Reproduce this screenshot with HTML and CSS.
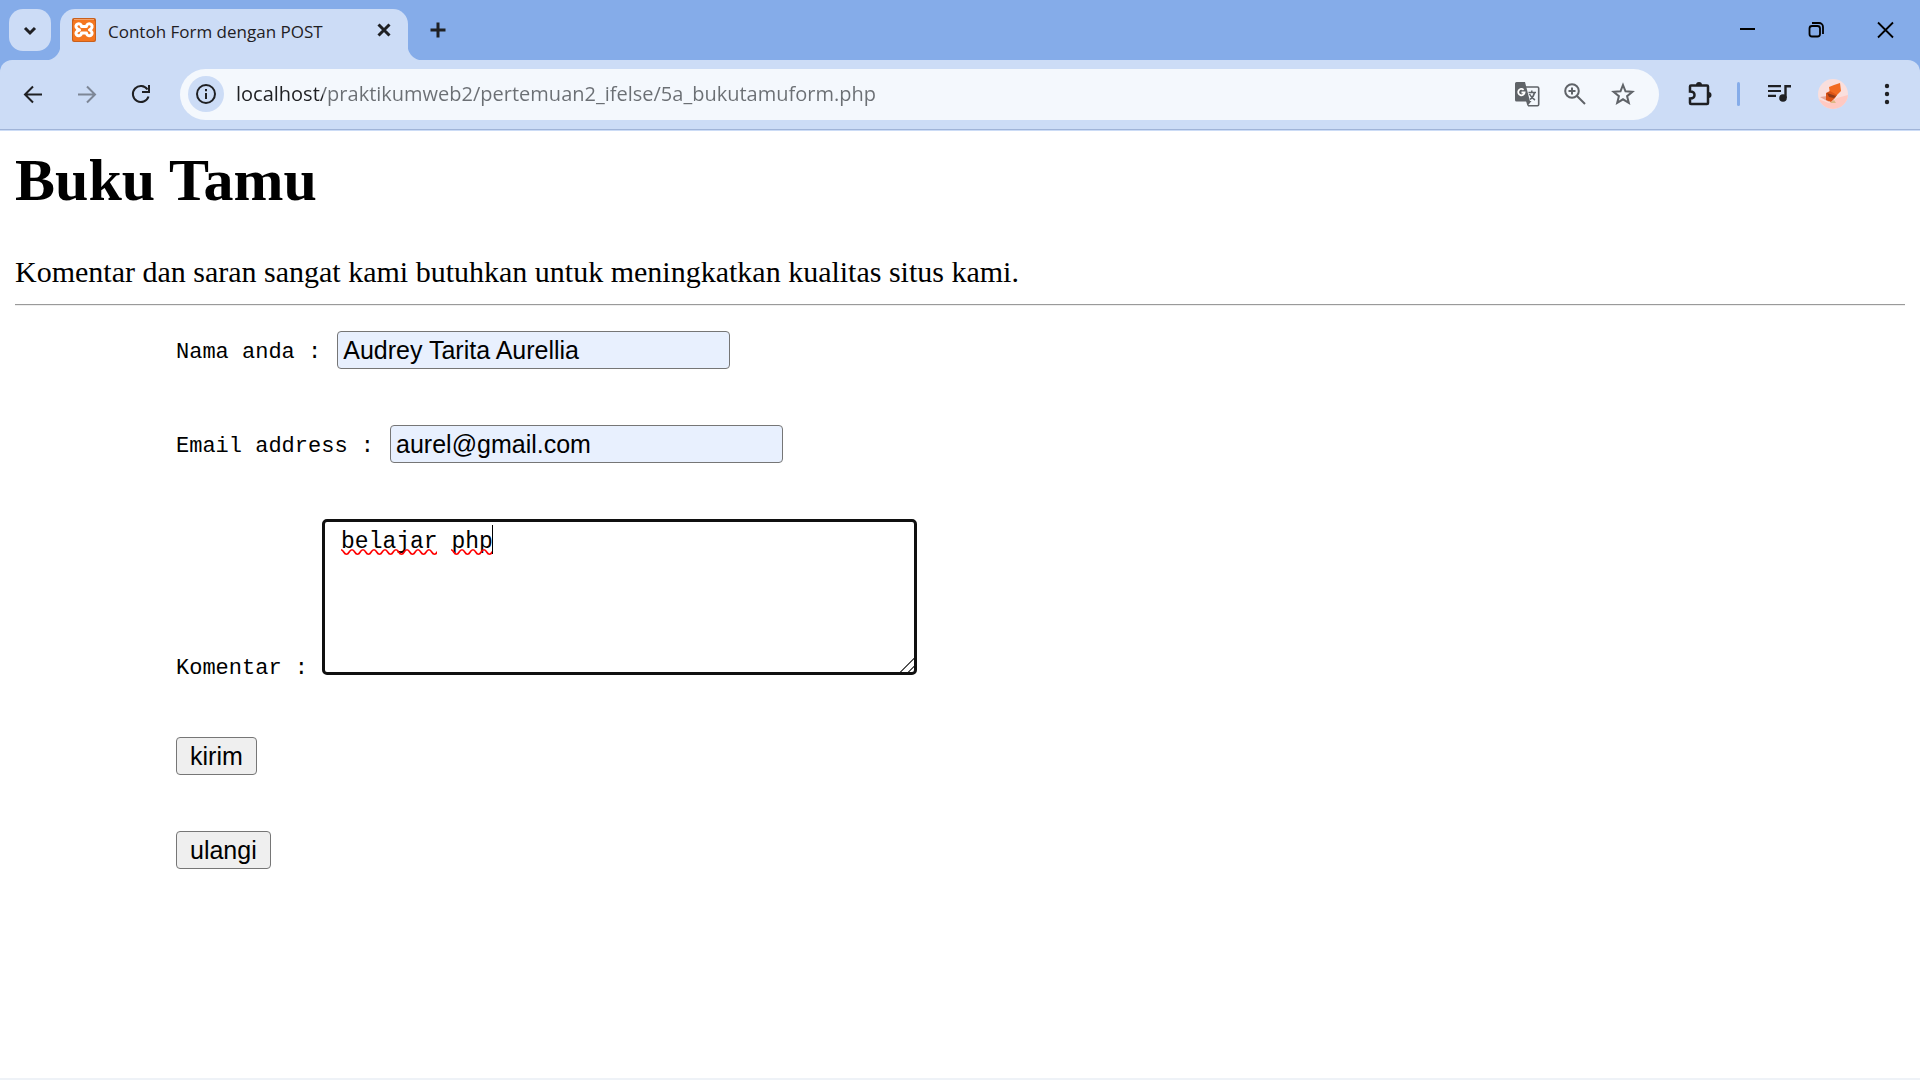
FILE: index.html
```html
<!DOCTYPE html>
<html lang="id">
<head>
<meta charset="utf-8">
<title>Contoh Form dengan POST</title>
<link rel="stylesheet" href="styles.css">
</head>
<body>
<div class="browser">
  <header class="tabstrip">
    <button class="tab-search" type="button" aria-label="Cari tab"><svg width="24" height="24" viewBox="0 0 24 24"><path class="line heavy" d="M7 10l5 5 5-5"/></svg></button>
    <div class="tab">
      <svg class="favicon" width="24" height="24" viewBox="0 0 24 24"><rect width="24" height="24" rx="2" fill="#c9601c"/><rect x="1" y="2" width="22" height="21" rx="2" fill="#f5761f"/><path d="M2 1.500h20" stroke="#f4a26b"/><path d="M7.500 12C3.500 10.500 3.500 8 4.500 6.800C6 5 9.300 5.500 9.500 8.500H14.500C14.700 5.500 18 5 19.500 6.800C20.500 8 20.500 10.500 17.500 11.800C20.500 13.500 20.500 15.500 19.500 16.800C18 18.500 14.700 18 14.500 15H9.500C9.300 18 6 18.500 4.500 16.800C3.500 15.500 3.500 13.500 7.500 12z" fill="none" stroke="#fff" stroke-width="3" stroke-linejoin="round"/></svg>
      <span class="tab-title">Contoh Form dengan POST</span>
      <button class="tab-close" type="button" aria-label="Tutup tab"><svg width="24" height="24" viewBox="0 0 24 24"><path class="line heavy" d="M6.500 6.500l11 11M17.500 6.500l-11 11"/></svg></button>
    </div>
    <button class="new-tab" type="button" aria-label="Tab baru"><svg width="24" height="24" viewBox="0 0 24 24"><path class="line heavy" d="M12 4.500v15M4.500 12h15"/></svg></button>
    <div class="window-buttons">
      <button type="button" aria-label="Perkecil"><svg width="24" height="24" viewBox="0 0 24 24"><path d="M4 11h15" fill="none" stroke="#000" stroke-width="2"/></svg></button>
      <button type="button" aria-label="Pulihkan"><svg width="24" height="24" viewBox="0 0 24 24"><g fill="none" stroke="#000" stroke-width="1.800"><rect x="4.500" y="8" width="10.500" height="10.500" rx="2.500"/><path d="M7 5h7a4 4 0 0 1 4 4v7"/></g></svg></button>
      <button type="button" aria-label="Tutup"><svg width="24" height="24" viewBox="0 0 24 24"><path d="M4 4.500l15 15M19 4.500l-15 15" fill="none" stroke="#000" stroke-width="1.800"/></svg></button>
    </div>
  </header>

  <nav class="toolbar">
    <button class="tool" type="button" aria-label="Kembali"><svg width="24" height="24" viewBox="0 0 24 24"><path class="line" d="M21 12.500H4.500M12 4.500l-8 8 8 8"/></svg></button>
    <button class="tool dim" type="button" aria-label="Maju"><svg width="24" height="24" viewBox="0 0 24 24"><path class="line" d="M3 12.500h16.500M12 4.500l8 8-8 8"/></svg></button>
    <button class="tool" type="button" aria-label="Muat ulang"><svg width="24" height="24" viewBox="0 0 24 24"><path class="line" d="M19.500 14.500A8 8 0 1 1 18.500 7.500"/><path d="M21 3v8h-8V9h6V3z" fill="#1f2023"/></svg></button>
    <div class="omnibox">
      <button class="site-info" type="button" aria-label="Info situs"><svg width="24" height="24" viewBox="0 0 24 24"><circle class="line" cx="12" cy="12" r="9"/><path d="M11 11h2v6h-2zM11 7h2v2.300h-2z" fill="#1f2023"/></svg></button>
      <input class="url" type="text" aria-label="Alamat" spellcheck="false" value="localhost/praktikumweb2/pertemuan2_ifelse/5a_bukutamuform.php">
      <button class="page-action" type="button" aria-label="Terjemahkan"><svg width="26" height="26" viewBox="0 0 26 26"><path d="M11 6h12.500a1.200 1.200 0 0 1 1.200 1.200v16.300a1.200 1.200 0 0 1-1.200 1.200h-9.500" fill="#f4f8fd" stroke="#5f6368" stroke-width="1.600"/><path d="M2.500 1h8.500l5 19.500H2.500A1.500 1.500 0 0 1 1 19v-16.500A1.500 1.500 0 0 1 2.500 1z" fill="#5f6368"/><path d="M12 20l1.500 5 4-5z" fill="#5f6368"/><path d="M9.600 8.800a3.200 3.200 0 1 0 1 2.700H7.500" fill="none" stroke="#fff" stroke-width="1.800"/><path d="M14.500 11.500H22M17.800 9.500v2M20.500 11.500c-.6 3-2.500 5.500-4.500 7M15.500 13c1.200 2.500 3 4.500 5.500 6" fill="none" stroke="#5f6368" stroke-width="1.500"/></svg></button>
      <button class="page-action" type="button" aria-label="Zoom"><svg width="24" height="24" viewBox="0 0 24 24"><g fill="none" stroke="#5f6368" stroke-width="2"><circle cx="9" cy="9" r="6.800"/><path d="M14 14l8 8M9 5.500v7M5.500 9h7"/></g></svg></button>
      <button class="page-action" type="button" aria-label="Bookmark"><svg width="24" height="24" viewBox="0 0 24 24"><path d="M12 3l2.500 6.300 6.900.5-5.300 4.400 1.700 6.700L12 17.300l-5.800 3.600 1.700-6.700L2.600 9.800l6.900-.5z" fill="none" stroke="#5f6368" stroke-width="2"/></svg></button>
    </div>
    <button class="tool extensions" type="button" aria-label="Ekstensi"><svg width="26" height="26" viewBox="0 0 26 26"><path class="line bold" d="M5 4.500h16a1 1 0 0 1 1 1V22a1 1 0 0 1-1 1H5a1 1 0 0 1-1-1v-4.500c4 0 4.500-2 4.500-3.500S8 10.500 4 10.500V5.500a1 1 0 0 1 1-1z"/><path d="M10 4a3 3 0 0 1 6 0zM22.500 11a3 3 0 0 1 0 6z" fill="#1f2023"/></svg></button>
    <span class="divider"></span>
    <button class="tool" type="button" aria-label="Kontrol media"><svg width="24" height="24" viewBox="0 0 24 24"><path d="M1 4.200h13M1 9h13M1 13.800h8" fill="none" stroke="#1f2023" stroke-width="2.200"/><circle cx="16" cy="16" r="3.800" fill="#1f2023"/><path d="M18.500 16V4.200H24" fill="none" stroke="#1f2023" stroke-width="2.400"/></svg></button>
    <button class="tool" type="button" aria-label="Profil"><svg width="30" height="30" viewBox="0 0 30 30"><defs><clipPath id="avatar"><circle cx="15" cy="15" r="15"/></clipPath></defs><g clip-path="url(#avatar)"><path fill="#fadfdd" d="M0 0h30v30H0z"/><path fill="#ffc9c2" d="M0 20l11 4 8-5 11-3v14H0z"/><path fill="#e3a69a" d="M2 18l7-1 2 6z"/><path fill="#f26a21" d="M11 8l5-2 6-2 1 8-5 5-6-2z"/><path fill="#dc5417" d="M8 14l4-2 7 4-2 3-4 4-5-2z"/><path fill="#8f3a19" d="M9 14l9 3-2 2-5-1z"/><path fill="#dbb884" d="M12 24l4-3 2 3z"/></g></svg></button>
    <button class="tool" type="button" aria-label="Menu"><svg width="24" height="24" viewBox="0 0 24 24"><g fill="#1f2023"><circle cx="12" cy="4" r="2.200"/><circle cx="12" cy="12" r="2.200"/><circle cx="12" cy="20" r="2.200"/></g></svg></button>
  </nav>

  <main class="page">
    <h1>Buku Tamu</h1>
    <p class="intro">Komentar dan saran sangat kami butuhkan untuk meningkatkan kualitas situs kami.</p>
    <hr>
    <form class="guestbook">
      <div class="row">
        <label for="nama">Nama anda :</label>
        <input class="field" id="nama" type="text" value="Audrey Tarita Aurellia">
      </div>
      <div class="row">
        <label for="email">Email address :</label>
        <input class="field" id="email" type="text" value="aurel@gmail.com">
      </div>
      <div class="row row-comment">
        <label for="komentar">Komentar :</label>
        <div class="comment">
          <textarea id="komentar" spellcheck="false">belajar php</textarea>
          <svg class="marks" width="160" height="32" viewBox="0 0 160 32">
            <defs><pattern id="wave" width="11" height="6" patternUnits="userSpaceOnUse" y="24"><path d="M-1 1L0 .8Q1.500 .8 2.700 3T5.500 5.200Q7 5.200 8.200 3T11 .8L12 1" fill="none" stroke="#f00" stroke-width="1.600"/></pattern></defs>
            <path d="M0 24h96v6H0zM110 24h41v6h-41z" fill="url(#wave)"/>
            <path d="M151 0h1v29h-1z"/>
          </svg>
        </div>
      </div>
      <button class="action" type="button">kirim</button>
      <button class="action" type="button">ulangi</button>
    </form>
  </main>
</div>
</body>
</html>
```
FILE: styles.css
```css
* { box-sizing: border-box; }

body { margin: 0; background: #fff; color: #000; }

button { margin: 0; cursor: default; }

.browser {
  display: flex;
  flex-direction: column;
  min-height: 100vh;
  background: linear-gradient(#85ace9 80px, #fff 80px);
}

.line { fill: none; stroke: #1f2023; stroke-width: 2; }
.bold { stroke-width: 2.5; }
.heavy { stroke-width: 3; }

.tabstrip button,
.toolbar button {
  display: flex;
  align-items: center;
  justify-content: center;
  padding: 0;
  border: 0;
  background: none;
}

/* Tab strip */
.tabstrip {
  display: flex;
  align-items: flex-start;
  height: 60px;
  padding: 9px 0 0 9px;
  background: #85ace9;
}

.tabstrip .tab-search {
  width: 42px;
  height: 42px;
  border-radius: 14px;
  background: #ccdcf6;
}

.tab {
  position: relative;
  display: flex;
  align-items: center;
  width: 348px;
  height: 51px;
  margin-left: 9px;
  padding: 0 12px 9px;
  border-radius: 15px 15px 0 0;
  background: #ccdcf6;
}

/* Curved feet that join the active tab to the toolbar */
.tab::before,
.tab::after {
  content: "";
  position: absolute;
  bottom: 0;
  width: 15px;
  height: 15px;
}
.tab::before { right: 100%; background: radial-gradient(circle at 0 0, transparent 15px, #ccdcf6 16px); }
.tab::after { left: 100%; background: radial-gradient(circle at 100% 0, transparent 15px, #ccdcf6 16px); }

.tab-title {
  flex: 1;
  margin: 3px 0 0 12px;
  font: 17px/24px "Open Sans", "Noto Sans", sans-serif;
  color: #1f2023;
  white-space: nowrap;
}

.tabstrip .new-tab { width: 42px; height: 42px; margin-left: 9px; }

.window-buttons { display: flex; margin-left: auto; }
.window-buttons button { width: 69px; height: 42px; }

/* Toolbar */
.toolbar {
  display: flex;
  align-items: center;
  height: 71px;
  padding: 0 6px 2px;
  border-radius: 12px 12px 0 0;
  border-bottom: 1px solid #ccdcf6;
  background: #ccdcf6;
  box-shadow: inset 0 -1px #a0b4d8;
}

.toolbar .tool { width: 54px; height: 51px; }
.tool.dim { opacity: .45; }
.toolbar .extensions { margin: 0 11px 0 13px; }

.divider { width: 3px; height: 24px; margin-right: 12px; border-radius: 2px; background: #85ace9; }

.omnibox {
  display: flex;
  flex: 1;
  align-items: center;
  height: 51px;
  margin-left: 12px;
  padding: 0 12px 0 8px;
  border-radius: 26px;
  background: #f4f8fd;
}
.omnibox .site-info { width: 36px; height: 36px; border-radius: 50%; background: #ccdcf6; }

/* The host is darker than the path behind it */
.url {
  flex: 1;
  min-width: 0;
  height: 36px;
  margin-left: 12px;
  padding: 0;
  border: 0;
  outline: 0;
  font: 20px/36px "Open Sans", "Noto Sans", sans-serif;
  color: transparent;
  background: linear-gradient(90deg, #1f2023 87px, #6b6f74 87px);
  background-clip: text;
  -webkit-background-clip: text;
}
.omnibox .page-action { width: 48px; height: 36px; }

/* Page */
.page {
  flex: 1;
  padding: 15px;
  border-bottom: 2px solid #eef2f7;
  background: #fff;
  font-family: "Liberation Serif", "Times New Roman", serif;
}

h1 { margin: 0 0 40px; font-size: 60px; line-height: 69px; }

.intro { margin: 0; font-size: 30px; line-height: 34px; }

hr {
  height: 2px;
  margin: 15px 0 25px;
  border: 0;
  border-top: 1px solid #9a9a9a;
  border-bottom: 1px solid #eee;
}

.guestbook {
  display: flex;
  flex-direction: column;
  align-items: flex-start;
  gap: 56px;
  margin-left: 161px;
}

.row { display: flex; align-items: center; gap: 16px; }
.row label { padding-top: 6px; font: 22px/26px "Liberation Mono", monospace; }

.field {
  width: 393px;
  height: 38px;
  padding: 2px 5px;
  border: 1px solid #767676;
  border-radius: 4px;
  background: #e8f0fe;
  font: 25px/30px "Liberation Sans", Arial, sans-serif;
  color: #000;
}

.row-comment { align-items: flex-end; gap: 14px; padding-bottom: 6px; }
.row-comment label { margin-bottom: -7px; }

.comment { position: relative; }

textarea {
  display: block;
  width: 595px;
  height: 156px;
  padding: 6px 16px;
  border: 3px solid #101010;
  border-radius: 5px;
  outline: 0;
  font: 23px/28px "Liberation Mono", monospace;
  color: #000;
}

/* Larger drag handle with two diagonal strokes */
textarea::-webkit-resizer {
  background: linear-gradient(135deg, transparent 52%, #555 52%, #555 59%, transparent 59%, transparent 78%, #555 78%, #555 85%, transparent 85%);
}

/* Spelling underlines and text caret */
.marks { position: absolute; left: 19px; top: 6px; pointer-events: none; }

.action {
  height: 38px;
  padding: 0 13px;
  border: 1px solid #767676;
  border-radius: 4px;
  background: #efefef;
  font: 25px/30px "Liberation Sans", Arial, sans-serif;
  color: #000;
}
```
